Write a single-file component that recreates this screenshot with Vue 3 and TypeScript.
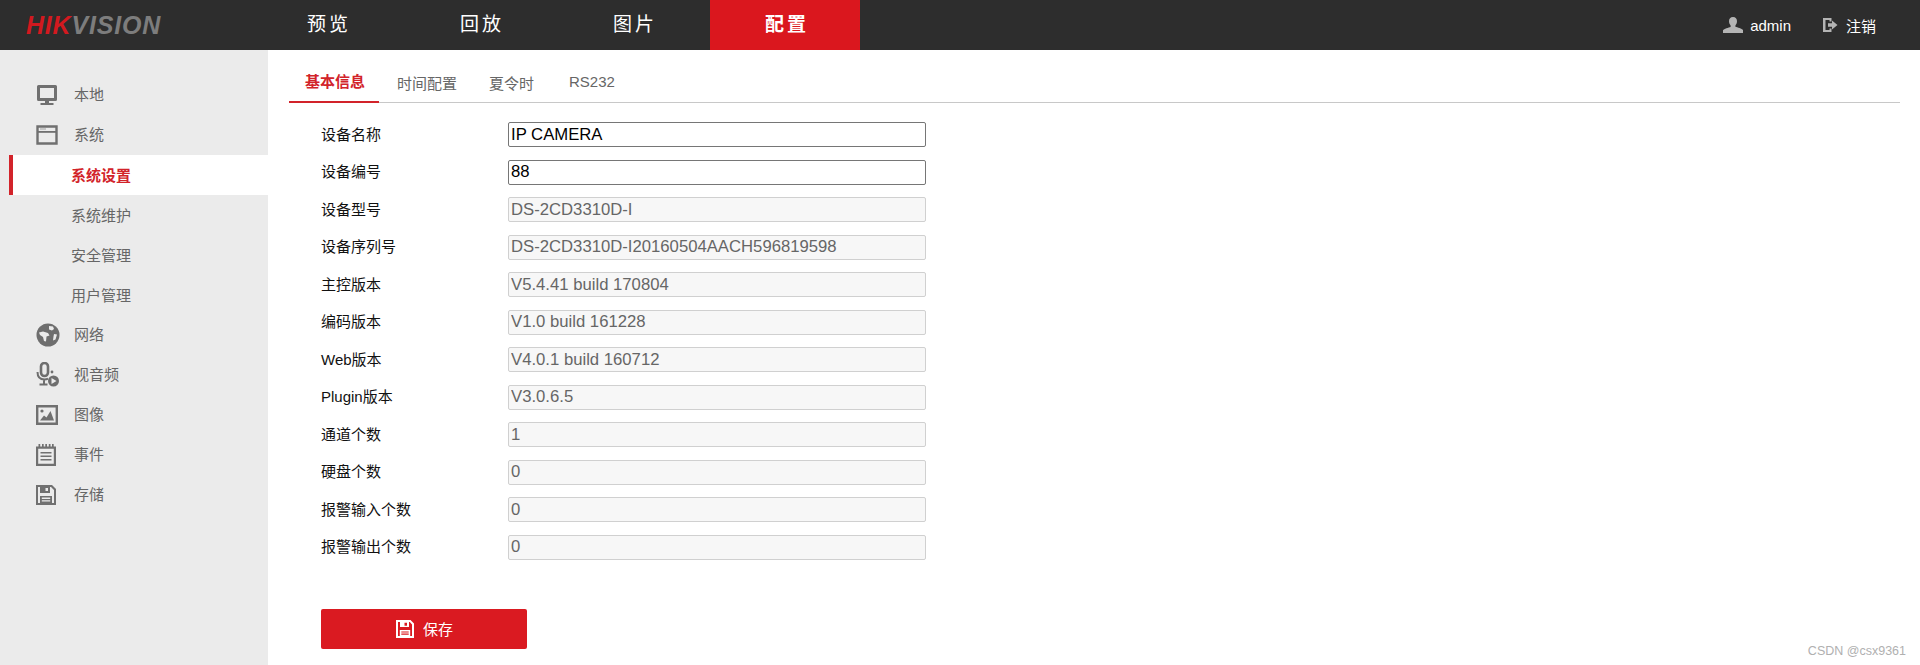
<script setup lang="ts">
interface MenuItem { label: string; icon?: string; sub?: boolean; active?: boolean }
const nav = [
  { label: '预览', active: false },
  { label: '回放', active: false },
  { label: '图片', active: false },
  { label: '配置', active: true },
]
const menu: MenuItem[] = [
  { label: '本地', icon: 'monitor' },
  { label: '系统', icon: 'window' },
  { label: '系统设置', sub: true, active: true },
  { label: '系统维护', sub: true },
  { label: '安全管理', sub: true },
  { label: '用户管理', sub: true },
  { label: '网络', icon: 'globe' },
  { label: '视音频', icon: 'mic' },
  { label: '图像', icon: 'image' },
  { label: '事件', icon: 'note' },
  { label: '存储', icon: 'disk' },
]
const tabs = ['基本信息', '时间配置', '夏令时', 'RS232']
const rows = [
  { label: '设备名称', value: 'IP CAMERA', edit: true },
  { label: '设备编号', value: '88', edit: true },
  { label: '设备型号', value: 'DS-2CD3310D-I', edit: false },
  { label: '设备序列号', value: 'DS-2CD3310D-I20160504AACH596819598', edit: false },
  { label: '主控版本', value: 'V5.4.41 build 170804', edit: false },
  { label: '编码版本', value: 'V1.0 build 161228', edit: false },
  { label: 'Web版本', value: 'V4.0.1 build 160712', edit: false },
  { label: 'Plugin版本', value: 'V3.0.6.5', edit: false },
  { label: '通道个数', value: '1', edit: false },
  { label: '硬盘个数', value: '0', edit: false },
  { label: '报警输入个数', value: '0', edit: false },
  { label: '报警输出个数', value: '0', edit: false },
]
</script>

<template>
  <div class="page">
    <header class="top">
      <div class="logo"><span class="hik">HIK</span><span class="vis">VISION</span></div>
      <nav class="nav">
        <div v-for="n in nav" :key="n.label" class="nav-item" :class="{ on: n.active }">{{ n.label }}</div>
      </nav>
      <div class="user">
        <svg class="uicon" viewBox="0 0 20 16" width="20" height="16">
          <path fill="#b4b4b4" d="M10 0c2.600 0 4 1.800 4 4.200 0 1.800-.8 3.200-1.600 4.200v1.400c2 .8 6.600 1.600 7.600 3.200V16H0v-2.800c1-1.600 5.600-2.400 7.600-3.200V8.400C6.800 7.400 6 6 6 4.200 6 1.800 7.400 0 10 0z" />
        </svg>
        <span class="uname">admin</span>
        <svg class="uicon out" viewBox="0 0 16 16" width="16" height="16">
          <path fill="#b4b4b4" d="M1 1h8.500v3.500H7.500V3H3.500v10h4v-1.500h2V15H1z" />
          <path fill="#b4b4b4" d="M6 6.200h4V3.500L15.500 8 10 12.500V9.800H6z" />
        </svg>
        <span class="logout">注销</span>
      </div>
    </header>

    <div class="body">
      <aside class="side">
        <div v-for="m in menu" :key="m.label" class="mi" :class="{ sub: m.sub, act: m.active }">
          <span v-if="m.icon" class="ic">
            <svg v-if="m.icon === 'monitor'" viewBox="0 0 22 22" width="22" height="22">
              <path fill="none" stroke="#707070" stroke-width="3" d="M2.500 2.500h17v13h-17z" stroke-linejoin="round" />
              <path fill="#707070" d="M9 16h4v3H9zM4.500 19h13v2h-13z" />
            </svg>
            <svg v-else-if="m.icon === 'window'" viewBox="0 0 22 22" width="22" height="22">
              <path fill="none" stroke="#707070" stroke-width="2.400" d="M1.500 2.500h19v17h-19z" />
              <path fill="#707070" d="M1.500 7h19v1.800h-19z" />
              <path fill="#a0a0a0" d="M4 4.500h6v1H4z" />
            </svg>
            <svg v-else-if="m.icon === 'globe'" viewBox="0 0 24 24" width="24" height="24">
              <circle cx="12" cy="12" r="11.500" fill="#6e6e6e" />
              <path fill="#ebebeb" d="M3 9.500l4-1 5 1.500 1.500 2.500-3 1-.5 5-2-.5L7 14l-3-2zM13 3l4 .5 1 2.500-2 1.500-3-1zM18 11l3 .5-1.500 5-2.500 1 .5-4z" />
            </svg>
            <svg v-else-if="m.icon === 'mic'" viewBox="0 0 24 26" width="24" height="26">
              <rect x="5" y="1" width="7" height="13" rx="3.500" fill="none" stroke="#6e6e6e" stroke-width="2.600" />
              <path fill="none" stroke="#6e6e6e" stroke-width="2" d="M1.500 10c0 5 3 7.500 7 7.500 1.500 0 2.500-.2 3.500-.8M8 18v4M3.500 22.500h8" />
              <circle cx="16" cy="10" r="1.400" fill="#6e6e6e" />
              <circle cx="17.500" cy="19" r="5.500" fill="#6e6e6e" />
              <path fill="#ebebeb" d="M15.500 16l5 3-5 3z" />
            </svg>
            <svg v-else-if="m.icon === 'image'" viewBox="0 0 22 20" width="22" height="20">
              <path fill="none" stroke="#707070" stroke-width="2.400" d="M1.200 1.200h19.600v17.600H1.200z" />
              <circle cx="6" cy="6" r="1.600" fill="#707070" />
              <path fill="#707070" d="M4 15.500l4-5 2.500 2 4-6.500 3.500 9.500z" />
            </svg>
            <svg v-else-if="m.icon === 'note'" viewBox="0 0 20 22" width="20" height="22">
              <path fill="none" stroke="#707070" stroke-width="2.200" d="M1.100 3.600h17.800v17.300H1.100z" />
              <path fill="#707070" d="M2.500 0h1.700v3H2.500zM6 0h1.700v3H6zM9.300 0H11v3H9.300zM12.800 0h1.700v3h-1.700zM16 0h1.700v3H16zM4.500 8h11v1.600h-11zM4.500 11.500h11v1.600h-11zM4.500 15h11v1.600h-11z" />
            </svg>
            <svg v-else viewBox="0 0 20 20" width="20" height="20">
              <path fill="#707070" fill-rule="evenodd" d="M0 0h16l4 4v16H0zM2 2v16h16V5l-3-3h-1v6H4V2zM9.500 3v3H12V3zM4 11h12v7H4zM5.800 12.600v1.300h8.400v-1.300zM5.800 15.200v1.300h8.400v-1.300z" />
            </svg>
          </span>
          <span class="lb">{{ m.label }}</span>
        </div>
      </aside>

      <main class="main">
        <div class="tabs">
          <div v-for="(t, i) in tabs" :key="t" class="tab" :class="{ cur: i === 0 }">{{ t }}</div>
        </div>
        <div class="form">
          <div v-for="r in rows" :key="r.label" class="row">
            <label class="rl">{{ r.label }}</label>
            <input class="inp" :class="{ ro: !r.edit }" :value="r.value" :disabled="!r.edit" />
          </div>
        </div>
        <button class="save" type="button">
          <svg viewBox="0 0 18 18" width="18" height="18">
            <path fill="#fff" fill-rule="evenodd" d="M0 0h14.500L18 3.500V18H0zM2 2v14h14V4.500L13.800 2H13v5H4V2zM8.500 2.800v3h2.500v-3zM3.800 10h10.400v6H3.800zM5.300 11.400v1.200h7.400v-1.200zM5.300 13.600v1.200h7.400v-1.200z" />
          </svg>
          <span class="save-label">保存</span>
        </button>
      </main>
    </div>
    <div class="mark">CSDN @csx9361</div>
  </div>
</template>

<style>
html, body { margin: 0; background: #fff; }
</style>

<style scoped>
.page {
  position: relative;
  width: 1920px;
  height: 665px;
  overflow: hidden;
  display: flex;
  flex-direction: column;
  font-family: "Liberation Sans", "Noto Sans CJK SC", sans-serif;
}
.top {
  height: 50px;
  flex: none;
  background: #2d2d2d;
  display: flex;
  align-items: center;
  color: #fff;
}
.logo {
  width: 252px;
  padding-left: 26px;
  box-sizing: border-box;
  font-style: italic;
  font-weight: 700;
  font-size: 25px;
  letter-spacing: 0.8px;
  white-space: nowrap;
}
.hik { color: #d2191f; }
.vis { color: #7d7d7d; }
.nav { display: flex; height: 50px; gap: 3px; }
.nav-item {
  width: 150px;
  height: 50px;
  line-height: 50px;
  text-align: center;
  font-size: 19px;
  letter-spacing: 3px;
  padding-left: 4px;
  box-sizing: border-box;
}
.nav-item.on { background: #da171e; font-weight: 700; margin-left: -1px; }
.user { margin-left: auto; display: flex; align-items: center; padding-right: 44px; font-size: 15px; }
.uname { margin-left: 7px; }
.out { margin-left: 31px; }
.logout { margin-left: 8px; font-size: 15px; }

.body { flex: 1; display: flex; min-height: 0; }
.side {
  width: 268px;
  flex: none;
  background: #ebebeb;
  padding-top: 25px;
  box-sizing: border-box;
}
.mi {
  height: 40px;
  display: flex;
  align-items: center;
  font-size: 15px;
  line-height: 38px;
  color: #666;
  margin-left: 9px;
  padding-left: 23px;
  box-sizing: border-box;
  border-left: 4px solid transparent;
}
.mi.sub { padding-left: 58px; }
.mi.sub .lb { position: relative; top: 1px; }
.mi.act { background: #fff; color: #d2232a; border-left-color: #d2232a; font-weight: 700; }
.ic { width: 38px; display: flex; align-items: center; flex: none; margin-top: -1px; }
.main { flex: 1; padding: 0 20px 0 21px; min-width: 0; }
.tabs {
  display: flex;
  height: 53px;
  box-sizing: border-box;
  border-bottom: 1px solid #c8c8c8;
  align-items: flex-end;
}
.tab {
  font-size: 15px;
  color: #666;
  height: 52px;
  padding: 0 16px;
  box-sizing: border-box;
  white-space: nowrap;
}
.tab.cur { width: 90px; color: #d2232a; font-weight: 700; border-bottom: 2px solid #d2232a; margin-bottom: -1px; height: 53px; line-height: 63px; }
.tab:nth-child(2) { padding: 0 0 0 18px; width: 78px; line-height: 68px; }
.tab:nth-child(3) { padding: 0 0 0 32px; width: 88px; line-height: 68px; }
.tab:nth-child(4) { padding: 0 0 0 24px; line-height: 64px; }
.form { padding: 0 0 0 32px; margin-top: 13px; }
.row { display: flex; align-items: center; height: 37.5px; }
.rl { width: 187px; flex: none; font-size: 15px; color: #111; line-height: 22px; }
.inp {
  width: 418px;
  height: 25px;
  box-sizing: border-box;
  border: 1px solid #767676;
  border-radius: 2px;
  padding: 0 2px;
  font: 16.7px "Liberation Sans", sans-serif;
  color: #000;
  background: #fff;
  outline: none;
}
.inp.ro { background: #f7f7f7; border-color: #d0d0d0; color: #666; }
.save {
  margin: 43px 0 0 32px;
  width: 206px;
  height: 40px;
  background: #da1a21;
  border: none;
  border-radius: 2px;
  display: flex;
  align-items: center;
  justify-content: center;
  gap: 10px;
  color: #fff;
  font: 15px "Liberation Sans", "Noto Sans CJK SC", sans-serif;
  padding: 0;
}
.save svg { position: relative; left: 1px; }
.save-label { position: relative; top: -1px; }
.mark {
  position: absolute;
  right: 14px;
  bottom: 7px;
  font-size: 12.5px;
  color: #b0b0b0;
}
</style>
